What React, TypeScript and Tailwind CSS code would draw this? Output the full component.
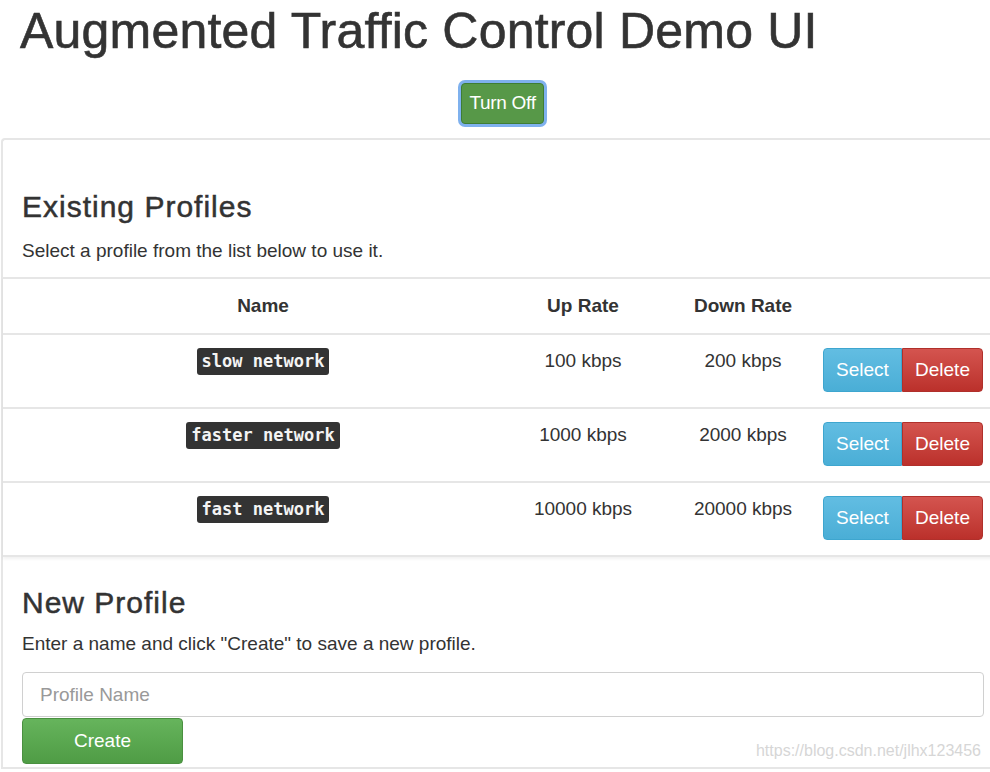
import React from 'react';

interface Profile {
  name: string;
  up: string;
  down: string;
}

const profiles: Profile[] = [
  { name: 'slow network', up: '100 kbps', down: '200 kbps' },
  { name: 'faster network', up: '1000 kbps', down: '2000 kbps' },
  { name: 'fast network', up: '10000 kbps', down: '20000 kbps' },
];

function ProfileRow({ profile }: { profile: Profile }) {
  return (
    <div className="grid grid-cols-[520px_140px_160px_1fr] border-t-2 border-[#e6e6e6] pt-[13px] pb-[15px]">
      <div className="text-center leading-[26px]">
        <code className="inline-block rounded-[3px] bg-[#333] px-[5px] py-[3px] font-['DejaVu_Sans_Mono',monospace] text-[17px] font-bold leading-[21px] text-[#f4f4f4]">
          {profile.name}
        </code>
      </div>
      <div className="pr-[20px] text-center text-[19px] leading-[26px]">{profile.up}</div>
      <div className="text-center text-[19px] leading-[26px]">{profile.down}</div>
      <div className="flex">
        <button className="h-[44px] w-[79px] rounded-l-[4px] border border-[#3ea6cf] bg-gradient-to-b from-[#62bde2] to-[#4aaed6] text-[19px] text-white">
          Select
        </button>
        <button className="h-[44px] w-[81px] rounded-r-[4px] border border-[#b0302b] bg-gradient-to-b from-[#d4544f] to-[#bb302b] text-[19px] text-white">
          Delete
        </button>
      </div>
    </div>
  );
}

export default function App() {
  return (
    <div className="relative h-[772px] w-[990px] overflow-hidden bg-white font-['Liberation_Sans',Arial,sans-serif] text-[#333]">
      <h1 className="pl-[20px] pt-[4px] text-[50px] leading-[55px] tracking-[0.2px] [-webkit-text-stroke:0.6px_#333]">
        Augmented Traffic Control Demo UI
      </h1>

      <div className="mt-[24px] flex justify-center pl-[15px]">
        <button className="h-[41px] w-[83px] rounded-[4px] border border-[#3f7d35] bg-[#579848] text-[19px] tracking-[-0.3px] text-white ring-3 ring-[#7fb1ee]">
          Turn Off
        </button>
      </div>

      <div className="ml-[1px] mt-[14px] w-[1006px] rounded-tl-[4px] border-b-2 border-l-2 border-t-2 border-[#e6e6e6] pb-[3px]">
        <h2 className="mt-[50px] pl-[19px] text-[30px] leading-[34px] tracking-[1px] [-webkit-text-stroke:0.5px_#333]">
          Existing Profiles
        </h2>
        <p className="mt-[14px] pl-[19px] text-[19px] leading-[26px]">Select a profile from the list below to use it.</p>

        <div className="mt-[13px] border-b-2 border-t-2 border-[#e6e6e6] shadow-[0_2px_3px_rgba(0,0,0,0.06)]">
          <div className="grid h-[54px] grid-cols-[520px_140px_160px_1fr] pt-[14px] text-[19px] font-bold leading-[26px]">
            <div className="text-center">Name</div>
            <div className="pr-[20px] text-center">Up Rate</div>
            <div className="text-center">Down Rate</div>
            <div />
          </div>
          {profiles.map((p) => (
            <ProfileRow key={p.name} profile={p} />
          ))}
        </div>

        <h2 className="mt-[29px] pl-[19px] text-[30px] leading-[34px] tracking-[1px] [-webkit-text-stroke:0.5px_#333]">
          New Profile
        </h2>
        <p className="mt-[11px] pl-[19px] text-[19px] leading-[26px]">
          Enter a name and click "Create" to save a new profile.
        </p>
        <div className="mt-[15px] pl-[19px]">
          <input
            type="text"
            placeholder="Profile Name"
            className="h-[45px] w-[962px] rounded-[4px] border border-[#d0d0d0] px-[17px] text-[19px] placeholder:text-[#999] outline-none"
          />
          <button className="mt-[1px] block h-[46px] w-[161px] rounded-[4px] border border-[#4a9040] bg-gradient-to-b from-[#66b45c] to-[#4f9c45] text-[19px] text-white">
            Create
          </button>
        </div>
      </div>

      <span className="absolute right-[9px] top-[742px] text-[16px] leading-[18px] text-[#d6d6d6]">
        https://blog.csdn.net/jlhx123456
      </span>
    </div>
  );
}
